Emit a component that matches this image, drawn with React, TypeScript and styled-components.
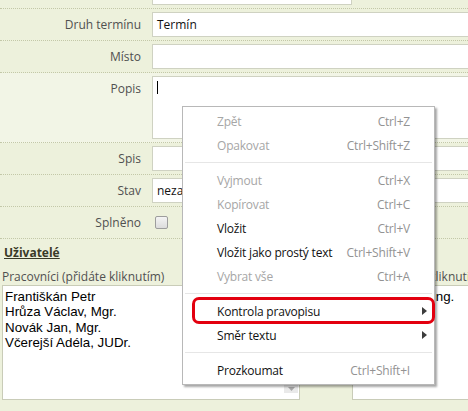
import React from "react";
import styled, { createGlobalStyle } from "styled-components";

const GlobalStyle = createGlobalStyle`
  html, body {
    margin: 0;
    padding: 0;
  }
  body {
    background: #edf1dc;
    font-family: "Open Sans", "Liberation Sans", sans-serif;
  }
`;

const Page = styled.div`
  position: relative;
  width: 468px;
  height: 411px;
  overflow: hidden;
  background: #edf1dc;
`;

const Form = styled.div`
  margin-top: -23px;
`;

const Row = styled.div<{ $focused?: boolean }>`
  display: grid;
  grid-template-columns: 141px 1fr;
  column-gap: 11px;
  align-items: start;
  padding: 3px 0;
  border-bottom: 1px dotted #c3c8a8;
  background: ${({ $focused }) => ($focused ? "#f2f5e6" : "transparent")};
`;

const Label = styled.label`
  font-size: 12px;
  line-height: 25px;
  color: #505050;
  text-align: right;
  white-space: nowrap;
`;

const Field = styled.div<{ $width?: string; $height?: number }>`
  box-sizing: border-box;
  width: ${({ $width }) => $width || "calc(100% + 20px)"};
  height: ${({ $height }) => $height || 25}px;
  background: #fff;
  border: 1px solid #cfd2c2;
  padding: 0 4px;
  font-size: 12px;
  line-height: 23px;
  color: #111;
  white-space: nowrap;
  overflow: hidden;
`;

const Caret = styled.span`
  display: block;
  width: 1px;
  height: 13px;
  margin: 4px 0 0 0;
  background: #000;
`;

const Check = styled.span`
  display: block;
  box-sizing: border-box;
  width: 13px;
  height: 13px;
  margin: 6px 0 0 3px;
  border: 1px solid #9d9d9d;
  border-radius: 2px;
  background: linear-gradient(#f4f4f4, #dcdcdc);
`;

const Section = styled.div`
  padding: 5px 0 0 2px;
`;

const SectionTitle = styled.h3`
  margin: 0 0 6px 2px;
  font-size: 12px;
  line-height: 18px;
  font-weight: 700;
  color: #3a3a28;
  text-decoration: underline;
`;

const Columns = styled.div`
  display: grid;
  grid-template-columns: 298px 1fr;
  column-gap: 52px;
`;

const ColumnLabel = styled.div`
  font-size: 12px;
  line-height: 17px;
  color: #505050;
  white-space: nowrap;
`;

const ListBox = styled.div<{ $bleed?: boolean }>`
  box-sizing: border-box;
  display: grid;
  grid-template-columns: 1fr 15px;
  width: ${({ $bleed }) => ($bleed ? "calc(100% + 20px)" : "100%")};
  height: 115px;
  background: #fff;
  border: 1px solid #c9ccb8;
`;

const Options = styled.div`
  padding: 3px 2px;
  font-family: "Liberation Sans", Arial, sans-serif;
  font-size: 13.33px;
  line-height: 15.33px;
  color: #000;
  white-space: nowrap;
  overflow: hidden;
`;

const ScrollBar = styled.div<{ $hidden?: boolean }>`
  display: ${({ $hidden }) => ($hidden ? "none" : "flex")};
  flex-direction: column;
  justify-content: flex-end;
  padding-bottom: 6px;
`;

const ScrollButton = styled.div`
  display: flex;
  align-items: center;
  justify-content: center;
  height: 9px;
  background: #e9e9e9;
  margin-right: 1px;
`;

const Menu = styled.div`
  position: absolute;
  left: 182px;
  top: 106px;
  width: 253px;
  box-sizing: border-box;
  padding: 2px 0;
  background: #fff;
  border: 1px solid #b8b8b8;
  box-shadow: 2px 2px 2px rgba(0, 0, 0, 0.35);
  font-family: "Open Sans", "Liberation Sans", sans-serif;
  font-size: 12px;
  letter-spacing: -0.2px;
`;

const Item = styled.div<{ $disabled?: boolean }>`
  display: flex;
  align-items: center;
  height: 24px;
  padding: 0 7px 0 34px;
  color: ${({ $disabled }) => ($disabled ? "#a6a6a6" : "#111")};
`;

const ItemText = styled.span`
  flex: 1;
  white-space: nowrap;
`;

const Shortcut = styled.span`
  margin-right: 17px;
  color: #939393;
  white-space: nowrap;
`;

const SubArrow = styled.span`
  width: 0;
  height: 0;
  border-top: 4px solid transparent;
  border-bottom: 4px solid transparent;
  border-left: 5px solid #3c3c3c;
`;

const Separator = styled.div`
  margin: 5px 2px;
  border-top: 1px solid #e6e6e6;
`;

const Highlight = styled.div`
  position: absolute;
  left: 192px;
  top: 297px;
  width: 243px;
  height: 27px;
  box-sizing: border-box;
  border: 3px solid #e3000f;
  border-radius: 7px;
`;

type MenuEntry =
  | { sep: true }
  | { label: string; shortcut?: string; disabled?: boolean; sub?: boolean };

const menu: MenuEntry[] = [
  { label: "Zpět", shortcut: "Ctrl+Z", disabled: true },
  { label: "Opakovat", shortcut: "Ctrl+Shift+Z", disabled: true },
  { sep: true },
  { label: "Vyjmout", shortcut: "Ctrl+X", disabled: true },
  { label: "Kopírovat", shortcut: "Ctrl+C", disabled: true },
  { label: "Vložit", shortcut: "Ctrl+V" },
  { label: "Vložit jako prostý text", shortcut: "Ctrl+Shift+V" },
  { label: "Vybrat vše", shortcut: "Ctrl+A", disabled: true },
  { sep: true },
  { label: "Kontrola pravopisu", sub: true },
  { label: "Směr textu", sub: true },
  { sep: true },
  { label: "Prozkoumat", shortcut: "Ctrl+Shift+I" },
];

const workers = [
  "Františkán Petr",
  "Hrůza Václav, Mgr.",
  "Novák Jan, Mgr.",
  "Včerejší Adéla, JUDr.",
];

export default function App() {
  return (
    <Page>
      <GlobalStyle />
      <Form>
        <Row>
          <Label />
          <Field $width="200px" />
        </Row>
        <Row>
          <Label>Druh termínu</Label>
          <Field>Termín</Field>
        </Row>
        <Row>
          <Label>Místo</Label>
          <Field />
        </Row>
        <Row $focused>
          <Label>Popis</Label>
          <Field $height={63}>
            <Caret />
          </Field>
        </Row>
        <Row>
          <Label>Spis</Label>
          <Field />
        </Row>
        <Row>
          <Label>Stav</Label>
          <Field>nezadáno</Field>
        </Row>
        <Row>
          <Label>Splněno</Label>
          <Check />
        </Row>
      </Form>

      <Section>
        <SectionTitle>Uživatelé</SectionTitle>
        <Columns>
          <div>
            <ColumnLabel>Pracovníci (přidáte kliknutím)</ColumnLabel>
            <ListBox>
              <Options>
                {workers.map((w) => (
                  <div key={w}>{w}</div>
                ))}
              </Options>
              <ScrollBar>
                <ScrollButton>
                  <svg width="7" height="4" viewBox="0 0 7 4">
                    <path d="M0 0h7L3.5 4z" fill="#a8a8a8" />
                  </svg>
                </ScrollButton>
              </ScrollBar>
            </ListBox>
          </div>
          <div>
            <ColumnLabel>Další (přidáte kliknutím)</ColumnLabel>
            <ListBox $bleed>
              <Options>
                <div>Dvořák Petr, Ing.</div>
              </Options>
              <ScrollBar $hidden />
            </ListBox>
          </div>
        </Columns>
      </Section>

      <Menu>
        {menu.map((m, i) =>
          "sep" in m ? (
            <Separator key={i} />
          ) : (
            <Item key={i} $disabled={m.disabled}>
              <ItemText>{m.label}</ItemText>
              {m.shortcut && <Shortcut>{m.shortcut}</Shortcut>}
              {m.sub && <SubArrow />}
            </Item>
          )
        )}
      </Menu>
      <Highlight />
    </Page>
  );
}
